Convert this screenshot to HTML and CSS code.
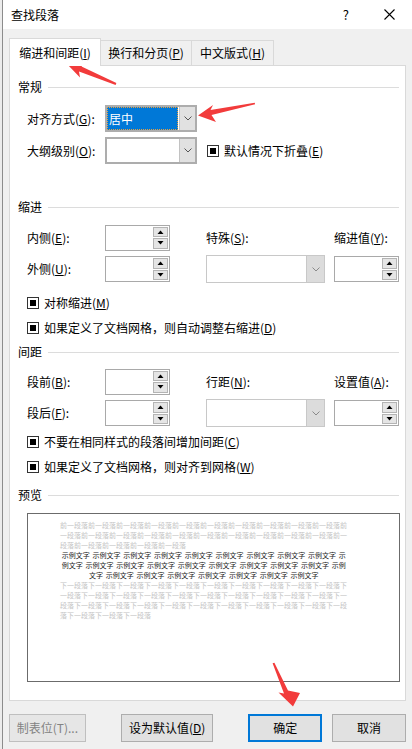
FILE: index.html
```html
<!DOCTYPE html>
<html lang="zh-CN">
<head>
<meta charset="utf-8">
<title>查找段落</title>
<link rel="stylesheet" href="styles.css">
</head>
<body>
<div class="win">
  <div class="titlebar">
    <span class="title">查找段落</span>
    <span class="help">?</span>
    <span class="close"><svg width="11" height="11" viewBox="0 0 11 11"><path d="M0.5 0.5L10.5 10.5M10.5 0.5L0.5 10.5" stroke="#000" stroke-width="1.1" fill="none"/></svg></span>
  </div>
  <div class="content">
    <div class="tabs">
      <div class="tab active">缩进和间距(<u>I</u>)</div>
      <div class="tab tab2">换行和分页(<u>P</u>)</div>
      <div class="tab tab3">中文版式(<u>H</u>)</div>
    </div>
    <div class="panel">
      <div class="hdr">常规</div>
      <div class="row r-first">
        <span class="lbl">对齐方式(<u>G</u>):</span>
        <div class="combo"><div class="field"><span class="sel">居中</span></div><div class="dd"><svg width="8" height="5" viewBox="0 0 8 5"><path d="M0.5 0.5L4 4L7.5 0.5" stroke="#555" fill="none"/></svg></div></div>
      </div>
      <div class="row r-gap5">
        <span class="lbl">大纲级别(<u>O</u>):</span>
        <div class="combo"><div class="field"></div><div class="dd"><svg width="8" height="5" viewBox="0 0 8 5"><path d="M0.5 0.5L4 4L7.5 0.5" stroke="#555" fill="none"/></svg></div></div>
        <div class="cbitem cb-col3"><span class="cb"></span><span>默认情况下折叠(<u>E</u>)</span></div>
      </div>

      <div class="hdr h-sec">缩进</div>
      <div class="row r-sub">
        <span class="lbl">内侧(<u>E</u>):</span>
        <div class="spin"><div class="sf"></div><div class="sbs"><span class="sb"><svg width="7" height="4" viewBox="0 0 7 4"><path d="M0.5 4L3.5 0.5L6.5 4Z" fill="#000"/></svg></span><span class="sb"><svg width="7" height="4" viewBox="0 0 7 4"><path d="M0.5 0L3.5 3.5L6.5 0Z" fill="#000"/></svg></span></div></div>
        <span class="lbl">特殊(<u>S</u>):</span>
        <span class="lbl">缩进值(<u>Y</u>):</span>
      </div>
      <div class="row r-gap4">
        <span class="lbl">外侧(<u>U</u>):</span>
        <div class="spin"><div class="sf"></div><div class="sbs"><span class="sb"><svg width="7" height="4" viewBox="0 0 7 4"><path d="M0.5 4L3.5 0.5L6.5 4Z" fill="#000"/></svg></span><span class="sb"><svg width="7" height="4" viewBox="0 0 7 4"><path d="M0.5 0L3.5 3.5L6.5 0Z" fill="#000"/></svg></span></div></div>
        <div class="combo wide disabled"><div class="field"></div><div class="dd"><svg width="8" height="5" viewBox="0 0 8 5"><path d="M0.5 0.5L4 4L7.5 0.5" stroke="#8a8a8a" fill="none"/></svg></div></div>
        <div class="spin"><div class="sf"></div><div class="sbs"><span class="sb"><svg width="7" height="4" viewBox="0 0 7 4"><path d="M0.5 4L3.5 0.5L6.5 4Z" fill="#000"/></svg></span><span class="sb"><svg width="7" height="4" viewBox="0 0 7 4"><path d="M0.5 0L3.5 3.5L6.5 0Z" fill="#000"/></svg></span></div></div>
      </div>
      <div class="cbitem cbrow cb-first"><span class="cb"></span><span>对称缩进(<u>M</u>)</span></div>
      <div class="cbitem cbrow cb-next"><span class="cb"></span><span>如果定义了文档网格，则自动调整右缩进(<u>D</u>)</span></div>

      <div class="hdr h-sec2">间距</div>
      <div class="row r-sub2">
        <span class="lbl">段前(<u>B</u>):</span>
        <div class="spin"><div class="sf"></div><div class="sbs"><span class="sb"><svg width="7" height="4" viewBox="0 0 7 4"><path d="M0.5 4L3.5 0.5L6.5 4Z" fill="#000"/></svg></span><span class="sb"><svg width="7" height="4" viewBox="0 0 7 4"><path d="M0.5 0L3.5 3.5L6.5 0Z" fill="#000"/></svg></span></div></div>
        <span class="lbl">行距(<u>N</u>):</span>
        <span class="lbl">设置值(<u>A</u>):</span>
      </div>
      <div class="row r-gap4">
        <span class="lbl">段后(<u>F</u>):</span>
        <div class="spin"><div class="sf"></div><div class="sbs"><span class="sb"><svg width="7" height="4" viewBox="0 0 7 4"><path d="M0.5 4L3.5 0.5L6.5 4Z" fill="#000"/></svg></span><span class="sb"><svg width="7" height="4" viewBox="0 0 7 4"><path d="M0.5 0L3.5 3.5L6.5 0Z" fill="#000"/></svg></span></div></div>
        <div class="combo wide disabled"><div class="field"></div><div class="dd"><svg width="8" height="5" viewBox="0 0 8 5"><path d="M0.5 0.5L4 4L7.5 0.5" stroke="#8a8a8a" fill="none"/></svg></div></div>
        <div class="spin"><div class="sf"></div><div class="sbs"><span class="sb"><svg width="7" height="4" viewBox="0 0 7 4"><path d="M0.5 4L3.5 0.5L6.5 4Z" fill="#000"/></svg></span><span class="sb"><svg width="7" height="4" viewBox="0 0 7 4"><path d="M0.5 0L3.5 3.5L6.5 0Z" fill="#000"/></svg></span></div></div>
      </div>
      <div class="cbitem cbrow cb-first2"><span class="cb"></span><span>不要在相同样式的段落间增加间距(<u>C</u>)</span></div>
      <div class="cbitem cbrow cb-next"><span class="cb"></span><span>如果定义了文档网格，则对齐到网格(<u>W</u>)</span></div>

      <div class="hdr h-sec3">预览</div>
      <div class="preview">
        <div class="pv grey">前一段落前一段落前一段落前一段落前一段落前一段落前一段落前一段落前一段落前一段落前一段落前一段落前一段落前一段落前一段落前一段落前一段落前一段落前一段落前一段落前一段落前一段落前一段落前一段落前一段落</div>
        <div class="pv sample">示例文字 示例文字 示例文字 示例文字 示例文字 示例文字 示例文字 示例文字 示例文字 示例文字 示例文字 示例文字 示例文字 示例文字 示例文字 示例文字 示例文字 示例文字 示例文字 示例文字 示例文字 示例文字 示例文字 示例文字 示例文字 示例文字</div>
        <div class="pv grey">下一段落下一段落下一段落下一段落下一段落下一段落下一段落下一段落下一段落下一段落下一段落下一段落下一段落下一段落下一段落下一段落下一段落下一段落下一段落下一段落下一段落下一段落下一段落下一段落下一段落下一段落下一段落下一段落下一段落下一段落下一段落下一段落下一段落下一段落</div>
      </div>
    </div>
    <div class="btns">
      <button class="btn b1" disabled>制表位(T)...</button>
      <button class="btn b2">设为默认值(<u>D</u>)</button>
      <button class="btn b3 primary">确定</button>
      <button class="btn b4">取消</button>
    </div>
  </div>
</div>
<svg class="arrows" width="412" height="749" viewBox="0 0 412 749">
  <polygon fill="#f23b3b" points="66,63 86,62 81.5,66.5 116.4,83.1 115.6,84.9 79,71.5 80,77.5"/>
  <polygon fill="#f23b3b" points="198,115.5 213,105 210.5,110 254.7,102.7 255.1,104.3 211.5,115 216,122"/>
  <polygon fill="#f23b3b" points="293,706.5 278.5,692.5 284,693.5 272.6,663.2 274.4,662.8 288,690.5 300,693"/>
</svg>
</body>
</html>
```
FILE: styles.css
```css
* { box-sizing: border-box; }
html, body { margin: 0; padding: 0; }
body {
  width: 412px;
  height: 749px;
  overflow: hidden;
  position: relative;
  background: #ececec;
  font-family: "Noto Sans CJK SC", "Microsoft YaHei", sans-serif;
  font-size: 12px;
  line-height: 16px;
  color: #000;
}
u { text-decoration: underline; text-underline-offset: 1px; text-decoration-thickness: 1px; }

.win {
  margin-left: 2px;
  width: 410px;
  height: 749px;
  border-left: 1px solid #8c8c8c;
  background: #f0f0f0;
}
.titlebar {
  height: 29px;
  background: #fff;
  display: flex;
  align-items: center;
  padding-left: 8px;
}
.title { flex: 1; }
.help { margin-right: 35px; font-size: 13px; }
.close { width: 11px; height: 11px; margin-right: 17px; display: flex; }

.content { padding: 9px 6px 0 6px; }

.tabs {
  display: flex;
  align-items: flex-end;
  height: 28px;
  position: relative;
  z-index: 1;
  margin-bottom: -1px;
}
.tab {
  height: 25px;
  margin-bottom: 1px;
  border: 1px solid #d9d9d9;
  border-left: none;
  border-bottom: none;
  background: #f0f0f0;
  display: flex;
  align-items: center;
  justify-content: center;
  white-space: nowrap;
}
.tab.active {
  width: 92px;
  height: 28px;
  margin-bottom: 0;
  padding-top: 1px;
  background: #fff;
  border-left: 1px solid #d9d9d9;
}
.tab2 { width: 91px; }
.tab3 { width: 82px; }

.panel {
  background: #fff;
  border: 1px solid #d9d9d9;
  height: 636px;
  padding: 13px 6px 0 8px;
}

.hdr {
  height: 16px;
  display: flex;
  align-items: center;
  gap: 6px;
}
.hdr::after {
  content: "";
  flex: 1;
  border-top: 1px solid #dcdcdc;
}
.h-sec { margin-top: 35px; }
.h-sec2 { margin-top: 8px; }
.h-sec3 { margin-top: 12px; }

.row {
  display: grid;
  grid-template-columns: 78px 101px 128px 64px;
  align-items: center;
  height: 27px;
  padding-left: 9px;
}
.r-first { margin-top: 10px; }
.r-gap5 { margin-top: 5px; }
.r-gap4 { margin-top: 4px; }
.r-sub { margin-top: 9px; }
.r-sub2 { margin-top: 8px; }
.lbl { white-space: nowrap; }

.combo {
  display: flex;
  width: 92px;
  height: 27px;
  border: 2px solid #adadad;
  background: #fff;
}
.combo .field { flex: 1; display: flex; padding: 0 1px 0 0; }
.sel {
  flex: 1;
  background: #0078d7;
  color: #fff;
  outline: 1px dotted #e8a040;
  outline-offset: -1px;
  padding-left: 2px;
  display: flex;
  align-items: center;
}
.dd {
  width: 16px;
  background: #e1e1e1;
  border-left: 1px solid #c2c2c2;
  display: flex;
  align-items: center;
  justify-content: center;
}
.combo.wide { width: 119px; height: 28px; }
.combo.disabled { border: 1px solid #c8c8c8; }
.combo.disabled .dd { width: 18px; background: #dcdcdc; border-left-color: #c8c8c8; }

.spin {
  display: flex;
  width: 65px;
  height: 26px;
  border: 1px solid #a9a9a9;
  background: #fff;
}
.sf { flex: 1; }
.sbs {
  display: flex;
  flex-direction: column;
  gap: 1px;
  padding: 1px 1px 1px 0;
}
.sb {
  flex: 1;
  width: 15px;
  border: 1px solid #b4b4b4;
  background: #e5e5e5;
  display: flex;
  align-items: center;
  justify-content: center;
}

.cbitem {
  display: flex;
  align-items: center;
  gap: 5px;
  white-space: nowrap;
}
.cb-col3 { margin-left: 1px; }
.cbrow { height: 16px; padding-left: 9px; }
.cb-first { margin-top: 13px; }
.cb-first2 { margin-top: 8px; }
.cb-next { margin-top: 9px; }
.cb {
  width: 12px;
  height: 12px;
  flex: none;
  border: 1px solid #333;
  padding: 2px;
  background: #fff;
}
.cb::after {
  content: "";
  display: block;
  width: 6px;
  height: 6px;
  background: #000;
}

.preview {
  margin: 10px 0 0 9px;
  width: 373px;
  height: 169px;
  border: 1px solid #6b6b6b;
  background: #fff;
  padding: 6px 0 0 32px;
}
.pv {
  width: 287.5px;
  font-size: 7px;
  line-height: 10px;
}
.grey { color: #c4c4c4; }
.sample { color: #1a1a1a; text-align: center; word-spacing: 1.2px; }

.btns {
  display: flex;
  margin-top: 13px;
}
.btn {
  height: 28px;
  padding: 0;
  font-family: inherit;
  font-size: 12px;
  line-height: 16px;
  color: #000;
  background: #e1e1e1;
  border: 1px solid #adadad;
  border-radius: 0;
}
.b1 { width: 77px; color: #838383; border-color: #bfbfbf; background: #e6e6e6; }
.b2 { width: 93px; margin-left: 35px; }
.b3 { width: 74px; margin-left: 35px; }
.b4 { width: 74px; margin-left: 10px; }
.primary { border: 2px solid #0078d7; }

.arrows {
  position: absolute;
  left: 0;
  top: 0;
  pointer-events: none;
}
```
